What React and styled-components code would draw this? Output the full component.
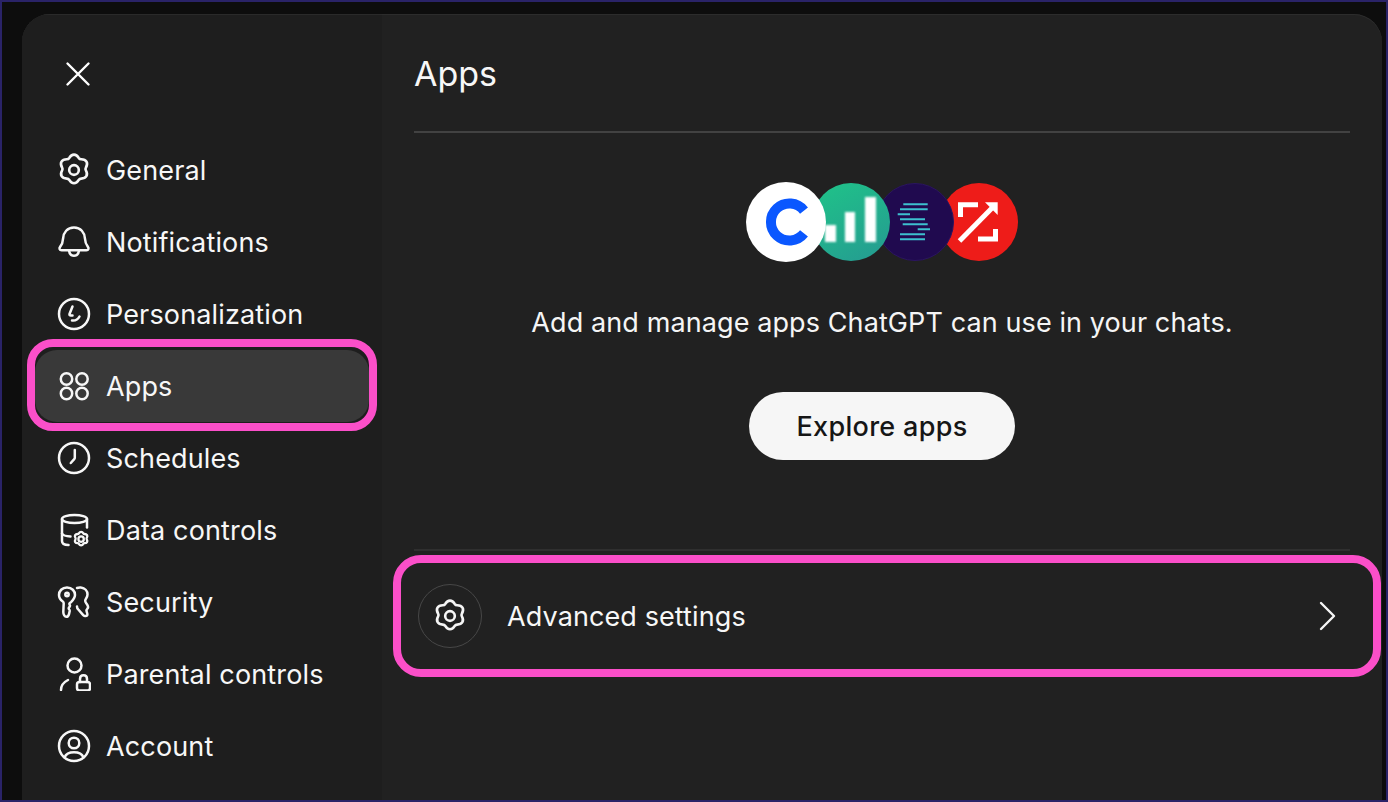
import React from "react";
import styled, { createGlobalStyle } from "styled-components";

const Global = createGlobalStyle`
  html, body { margin: 0; padding: 0; height: 100%; background: #0d0d0d; }
  #root { height: 100%; }
  * { box-sizing: border-box; }
`;

const Frame = styled.div`
  width: 1388px;
  height: 802px;
  border: 2px solid #2a2368;
  background: #0d0d0d;
  padding: 12px 4px 0 20px;
  overflow: hidden;
  font-family: Inter, "Liberation Sans", sans-serif;
  color: #f5f5f5;
`;

const Panel = styled.div`
  height: 100%;
  display: flex;
  border-radius: 28px 28px 0 0;
  overflow: hidden;
  box-shadow: inset 0 1px 0 #2c2c2c;
  background: #212121;
`;

const Sidebar = styled.aside`
  width: 360px;
  flex: none;
  background: #1e1e1e;
  box-shadow: inset 0 1px 0 #2a2a2a;
  display: flex;
  flex-direction: column;
`;

const CloseButton = styled.button`
  all: unset;
  width: 32px;
  height: 32px;
  margin: 44px 0 44px 40px;
  display: flex;
  align-items: center;
  justify-content: center;
  color: #fff;
`;

const NavList = styled.nav`
  display: flex;
  flex-direction: column;
`;

const NavItem = styled.div`
  position: relative;
  height: 72px;
  margin: 0 13px;
  padding-left: 22px;
  display: flex;
  align-items: center;
  gap: 15px;
  font-size: 27px;
  letter-spacing: 0.14px;
  color: #f7f7f7;
  border-radius: 22px;
  background: ${(p) => (p.$active ? "#393939" : "transparent")};
  ${(p) =>
    p.$active &&
    `&::after {
      content: "";
      position: absolute;
      inset: -11px -8px -9px -8px;
      border: 8px solid #fb4fc9;
      border-radius: 26px;
    }`}
`;

const IconSlot = styled.span`
  width: 34px;
  height: 34px;
  flex: none;
  display: flex;
  align-items: center;
  justify-content: center;
`;

const Main = styled.main`
  flex: 1;
  min-width: 0;
  display: flex;
  flex-direction: column;
`;

const Header = styled.header`
  height: 119px;
  margin: 0 32px;
  border-bottom: 2px solid #424242;
  padding-top: 35px;
`;

const Title = styled.h1`
  margin: 0;
  font-size: 34px;
  font-weight: 400;
  line-height: 50px;
  color: #f7f7f7;
`;

const Hero = styled.section`
  height: 418px;
  margin: 0 32px;
  border-bottom: 2px solid #2f2f2f;
  padding-top: 49px;
  display: flex;
  flex-direction: column;
  align-items: center;
`;

const LogoRow = styled.div`
  display: flex;
  height: 80px;
`;

const Logo = styled.svg`
  width: ${(p) => (p.$first ? 80 : 78)}px;
  height: 80px;
  margin-left: ${(p) => (p.$first ? "0" : "-14px")};
  z-index: ${(p) => p.$z};
  position: relative;
`;

const Tagline = styled.p`
  margin: 41px 0 0;
  font-size: 27px;
  line-height: 40px;
  letter-spacing: 0.1px;
  color: #f5f5f5;
`;

const ExploreButton = styled.button`
  all: unset;
  margin-top: 49px;
  width: 266px;
  height: 68px;
  border-radius: 34px;
  background: #f6f6f6;
  color: #161616;
  font-size: 27px;
  font-weight: 500;
  letter-spacing: 0.3px;
  display: flex;
  align-items: center;
  justify-content: center;
`;

const AdvancedRow = styled.div`
  height: 122px;
  margin: 4px 1px 0 11px;
  border: 8px solid #fb4fc9;
  border-radius: 28px;
  padding: 0 31px 0 17px;
  display: flex;
  align-items: center;
  gap: 25px;
`;

const RoundIcon = styled.span`
  width: 64px;
  height: 64px;
  flex: none;
  border-radius: 50%;
  border: 1px solid #474747;
  display: flex;
  align-items: center;
  justify-content: center;
`;

const RowLabel = styled.span`
  flex: 1;
  font-size: 27px;
  letter-spacing: 0.1px;
  color: #f7f7f7;
`;

const Line = styled.svg`
  width: ${(p) => p.$size || 34}px;
  height: ${(p) => p.$size || 34}px;
  fill: none;
  stroke: currentColor;
  stroke-width: ${(p) => p.$w || 2.5};
  stroke-linecap: round;
  stroke-linejoin: round;
`;

const FLOWER =
  "M17 2.4c2.2 0 3.6 1.5 4.5 3.1.5.8 1.4 1.3 2.4 1.3 2 0 3.9.4 5 2.3 1.1 1.9.5 3.8-.5 5.5-.5.9-.5 2-.1 2.8 1 1.7 1.6 3.6.5 5.5-1.1 1.9-3 2.3-4.9 2.3-1 0-1.9.5-2.4 1.3-.9 1.6-2.3 3.1-4.5 3.1s-3.6-1.5-4.5-3.1c-.5-.8-1.4-1.3-2.4-1.3-1.9 0-3.8-.4-4.9-2.3-1.1-1.9-.5-3.8.5-5.5.4-.8.4-1.9-.1-2.8-1-1.7-1.6-3.6-.5-5.5 1.1-1.9 3-2.3 5-2.3 1 0 1.9-.5 2.4-1.3.9-1.6 2.3-3.1 4.5-3.1Z";

const Gear = () => (
  <Line viewBox="0.8 0.8 32.4 32.4">
    <path d={FLOWER} />
    <circle cx="17" cy="17" r="4.6" />
  </Line>
);

const Bell = () => (
  <Line viewBox="0 0 34 34">
    <path d="M17 2.5c-6.8 0-10.5 5-10.9 10.8-.2 3.5-1 6.2-3 8.6-1.2 1.5-.6 3.3 1.5 3.3h24.8c2.1 0 2.7-1.8 1.5-3.3-2-2.4-2.8-5.1-3-8.6C27.5 7.5 23.8 2.5 17 2.5Z" />
    <path d="M12 25.5c.4 3.2 2.3 5.3 5 5.3s4.6-2.1 5-5.3" />
  </Line>
);

const Smile = () => (
  <Line viewBox="0 0 34 34">
    <circle cx="17" cy="17" r="15" />
    <path d="M15.5 9.5 12.5 17c-.3 1 .3 1.5 1.3 1.5h1.7" />
    <path d="M15 23.5c2.8.4 5.8-.8 7.5-4" />
  </Line>
);

const Apps = () => (
  <Line viewBox="0 0 34 34">
    <circle cx="9.5" cy="10" r="5.7" />
    <circle cx="25" cy="10" r="5.7" />
    <circle cx="9.5" cy="24.5" r="5.7" />
    <circle cx="25" cy="24.5" r="5.7" />
  </Line>
);

const Clock = () => (
  <Line viewBox="0 0 34 34">
    <circle cx="17" cy="17" r="15" />
    <path d="M17.8 9v7.7c0 .6-.2 1.1-.6 1.5L13.8 22" />
  </Line>
);

const Database = () => (
  <Line viewBox="0 0 34 34">
    <ellipse cx="17.5" cy="6" rx="12.5" ry="4" />
    <path d="M5 6v22c0 2.5 2 4 6.5 4" />
    <path d="M30 6v8.5" />
    <path d="M5 20.5c1 1.8 4 2.8 8.5 3" />
    <g transform="translate(15.6 17.6) scale(0.5)">
      <path d={FLOWER} strokeWidth="4.6" />
      <circle cx="17" cy="17" r="5.4" strokeWidth="4.6" />
    </g>
  </Line>
);

const Keys = () => (
  <Line viewBox="0 0 34 34">
    <path d="M10 2.5C5 2.5 2 6 2 10c0 3.2 1.8 5.2 3.8 6.5.6.4.9 1 .9 1.7L6.3 27c0 2.5 1.5 4.8 3 4.8 1.5 0 2.3-1 2.7-2.7l.7-3.1c.2-1-1-1.700-1-2.600 0-1 1.300-1.600 1.300-2.700 0-.8-.8-1.200-.6-2.100.2-.7.9-1 1.600-1.400C16.300 14.800 18 12.800 18 10 18 6 15 2.500 10 2.500Z" />
    <circle cx="10" cy="9.5" r="1.7" />
    <path d="M20 3c1.5-.6 3-.7 4-.5 3.8.6 6.500 3.600 6.500 7 0 2.800-2 4.200-2.300 6-.3 1.700 1.100 2.700 2 4.200 1 1.600 1.300 3 .2 4-1 .9-1.200 1.800-.7 3 .5 1.300 1.200 3 .3 3.800-1 .9-3 .4-4-.7l-4.700-5.300c-.9-1-1.300-2-1.300-3.100" />
  </Line>
);

const PersonLock = () => (
  <Line viewBox="0 0 34 34">
    <circle cx="17.5" cy="8.5" r="7" />
    <path d="M4 33c0-4 3-8 7-10" />
    <rect x="20" y="25" width="13" height="8.5" rx="2.5" />
    <path d="M23 25v-3c0-2.200 1.300-3.700 3.500-3.700s3.500 1.500 3.500 3.700v3" />
  </Line>
);

const Account = () => (
  <Line viewBox="0 0 34 34">
    <circle cx="17" cy="17" r="15" />
    <circle cx="17" cy="14" r="5.3" />
    <path d="M7.5 28.5c1.500-3.700 5-5.200 9.500-5.200s8 1.500 9.500 5.200" />
  </Line>
);

const items = [
  ["General", Gear],
  ["Notifications", Bell],
  ["Personalization", Smile],
  ["Apps", Apps, true],
  ["Schedules", Clock],
  ["Data controls", Database],
  ["Security", Keys],
  ["Parental controls", PersonLock],
  ["Account", Account],
];

export default function App() {
  return (
    <>
      <Global />
      <Frame>
        <Panel>
          <Sidebar>
            <CloseButton aria-label="Close">
              <Line viewBox="0 0 32 32" $size={32} $w={2.4}>
                <path d="M5.5 5.5l21 21M26.5 5.5l-21 21" />
              </Line>
            </CloseButton>
            <NavList>
              {items.map(([label, Icon, active]) => (
                <NavItem key={label} $active={active}>
                  <IconSlot><Icon /></IconSlot>
                  {label}
                </NavItem>
              ))}
            </NavList>
          </Sidebar>
          <Main>
            <Header><Title>Apps</Title></Header>
            <Hero>
              <LogoRow>
                <Logo viewBox="0 0 80 80" $first $z={4}>
                  <circle cx="40" cy="40" r="40" fill="#fff" />
                  <path d="M58 28.6A18.5 18.5 0 1 0 58 51.4" fill="none" stroke="#0a57ff" strokeWidth="10" />
                </Logo>
                <Logo viewBox="0 0 78 80" $z={3}>
                  <defs>
                    <linearGradient id="g" x1="0" y1="0" x2="0.6" y2="1">
                      <stop offset="0" stopColor="#1fc488" />
                      <stop offset="1" stopColor="#24a090" />
                    </linearGradient>
                    <filter id="b"><feGaussianBlur stdDeviation="1.1" /></filter>
                  </defs>
                  <circle cx="39" cy="40" r="39" fill="url(#g)" />
                  <g fill="#fff" filter="url(#b)">
                    <rect x="13" y="43" width="11" height="17" />
                    <rect x="33" y="30" width="10" height="30" />
                    <rect x="53" y="15" width="11" height="45" />
                  </g>
                </Logo>
                <Logo viewBox="0 0 78 80" $z={2}>
                  <circle cx="39" cy="40" r="38.5" fill="#200a4f" stroke="#2b1560" strokeWidth="1" />
                  <path
                    d="M27.3 22.3H51.7M24 27.3H51.7M21.7 32.3H34M24 37.3H49M26.7 42.3H51.7M41.7 47.3H54M24 52.3H49M24 57.3H49"
                    stroke="#3dc0cf"
                    strokeWidth="2"
                    fill="none"
                  />
                </Logo>
                <Logo viewBox="0 0 78 80" $z={1}>
                  <circle cx="39" cy="40" r="39" fill="#ee1c19" />
                  <g fill="none" stroke="#fff" strokeWidth="5">
                    <path d="M38 22.8H20.5V35" />
                    <path d="M38 57H55.5V47" />
                    <path d="M54 24 19.500 59" />
                  </g>
                  <path d="M45 20.3H57.7V33Z" fill="#fff" />
                </Logo>
              </LogoRow>
              <Tagline>Add and manage apps ChatGPT can use in your chats.</Tagline>
              <ExploreButton>Explore apps</ExploreButton>
            </Hero>
            <AdvancedRow>
              <RoundIcon><Gear /></RoundIcon>
              <RowLabel>Advanced settings</RowLabel>
              <Line viewBox="0 0 20 30" $size={30} $w={2.4}>
                <path d="M4 2l13 13L4 28" />
              </Line>
            </AdvancedRow>
          </Main>
        </Panel>
      </Frame>
    </>
  );
}
